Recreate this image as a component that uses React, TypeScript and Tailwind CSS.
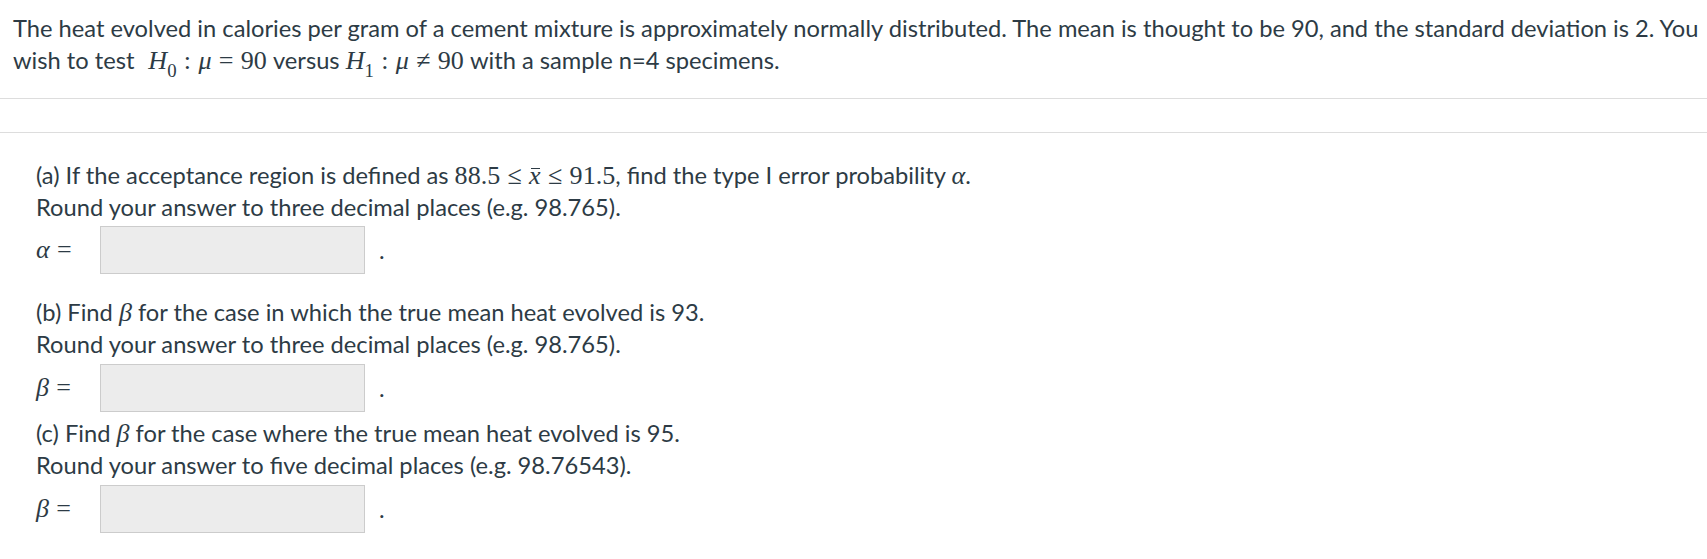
import React from "react";

const M = ({ children, className = "" }: { children: React.ReactNode; className?: string }) => (
  <span className={"font-['Liberation_Serif',serif] text-[1.1em] leading-none " + className}>{children}</span>
);
const I = ({ children }: { children: React.ReactNode }) => (
  <span className="italic">{children}</span>
);
const R = ({ children }: { children: React.ReactNode }) => (
  <span className="mx-[0.28em]">{children}</span>
);
const XBar = () => (
  <span className="relative inline-block italic">
    x
    <span className="absolute left-[0.08em] right-[0.02em] top-[0.2em] border-t border-current" />
  </span>
);

function Answer({ sym }: { sym: React.ReactNode }) {
  return (
    <div className="flex items-center h-[48px]">
      <span className="w-[64px] font-['Liberation_Serif',serif] text-[26px]">
        <span className="italic">{sym}</span>
        <span className="ml-[0.28em]">=</span>
      </span>
      <div className="w-[265px] h-[48px] bg-[#ececec] border border-[#cccccc]" />
      <span className="ml-[14px]">.</span>
    </div>
  );
}

export default function App() {
  return (
    <div className="bg-white text-[#2d3b45] font-['Lato','Noto_Sans',sans-serif] text-[23.7px] leading-[32px] min-h-[559px]">
      <div className="pl-[13px] pr-[4px] pt-[12px] pb-[22px]">
        The heat evolved in calories per gram of a cement mixture is approximately normally distributed. The mean
        is thought to be 90, and the standard deviation is 2. You wish to test{" "}
        <M className="ml-[0.3em]">
          <I>H</I>
          <sub className="text-[0.72em] align-[-0.2em]">0</sub>
          <R>:</R>
          <I>μ</I>
          <R>=</R>90
        </M>{" "}
        versus{" "}
        <M>
          <I>H</I>
          <sub className="text-[0.72em] align-[-0.2em]">1</sub>
          <R>:</R>
          <I>μ</I>
          <R>≠</R>90
        </M>{" "}
        with a sample n=4 specimens.
      </div>
      <div className="border-t border-[#dddddd] h-[34px]" />
      <div className="border-t border-[#dddddd] pl-[36px] pt-[26px]">
        <div>
          (a) If the acceptance region is defined as{" "}
          <M>
            88.5<R>≤</R>
            <XBar />
            <R>≤</R>91.5
          </M>
          , find the type I error probability <M><I>α</I></M>.
        </div>
        <div>Round your answer to three decimal places (e.g. 98.765).</div>
        <div className="mt-[3px]">
          <Answer sym="α" />
        </div>
        <div className="mt-[22px]">
          (b) Find <M><I>β</I></M> for the case in which the true mean heat evolved is 93.
        </div>
        <div>Round your answer to three decimal places (e.g. 98.765).</div>
        <div className="mt-[4px]">
          <Answer sym="β" />
        </div>
        <div className="mt-[5px]">
          (c) Find <M><I>β</I></M> for the case where the true mean heat evolved is 95.
        </div>
        <div>Round your answer to five decimal places (e.g. 98.76543).</div>
        <div className="mt-[4px]">
          <Answer sym="β" />
        </div>
      </div>
    </div>
  );
}
